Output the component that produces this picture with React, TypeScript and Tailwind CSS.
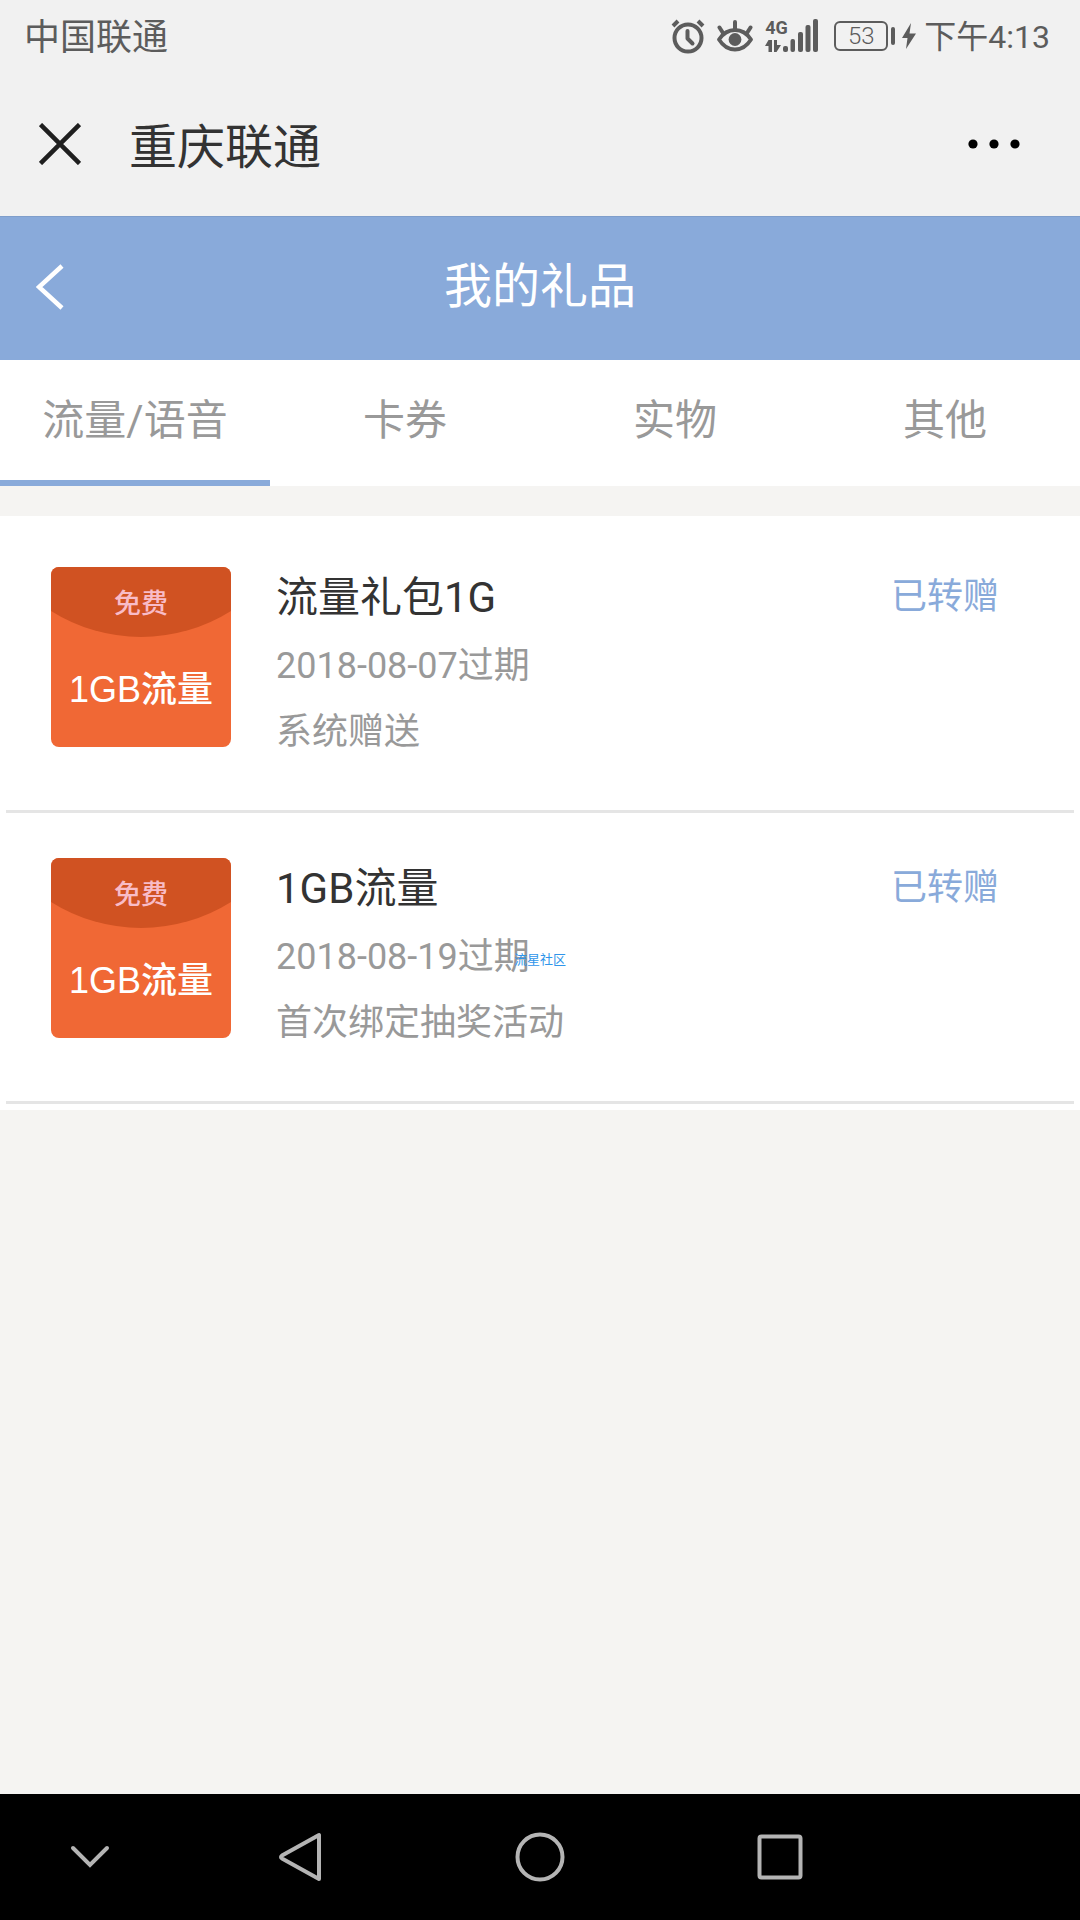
import { useState } from "react";

interface Gift {
  id: number;
  title: string;
  expires: string;
  source: string;
  status: string;
}

const tabs = ["流量/语音", "卡券", "实物", "其他"];

const gifts: Gift[] = [
  {
    id: 1,
    title: "流量礼包1G",
    expires: "2018-08-07过期",
    source: "系统赠送",
    status: "已转赠",
  },
  {
    id: 2,
    title: "1GB流量",
    expires: "2018-08-19过期",
    source: "首次绑定抽奖活动",
    status: "已转赠",
  },
];

function AlarmIcon() {
  return (
    <svg width="34" height="36" viewBox="0 0 34 36" fill="none" stroke="currentColor">
      <circle cx="17" cy="20" r="13.5" strokeWidth="4" />
      <path d="M16.5 13v7.5l5 5" strokeWidth="4" strokeLinecap="round" strokeLinejoin="round" />
      <path d="M2 8l5-5M32 8l-5-5" strokeWidth="4" />
    </svg>
  );
}

function EyeIcon() {
  return (
    <svg width="36" height="32" viewBox="0 0 36 32" fill="none" stroke="currentColor">
      <path
        d="M2 19.500C6 13.500 11.500 10 18 10s12 3.500 16 9.500C30 26 24.500 29.500 18 29.500S6 26 2 19.500z"
        strokeWidth="3.800"
        strokeLinejoin="round"
      />
      <circle cx="18" cy="19.500" r="6.400" fill="currentColor" stroke="none" />
      <path d="M18 10V2M6 13L2.500 7.500M30 13l3.500-5.500" strokeWidth="4" strokeLinecap="round" />
    </svg>
  );
}

function SignalIcon() {
  return (
    <svg width="36" height="36" viewBox="0 0 36 36" fill="currentColor">
      <rect x="0" y="28" width="5" height="6" rx="2" />
      <rect x="7.500" y="21" width="4.500" height="13" rx="2" />
      <rect x="15" y="14" width="5" height="20" rx="2" />
      <rect x="22.500" y="7" width="5" height="27" rx="2" />
      <rect x="30" y="1" width="5" height="33" rx="2" />
    </svg>
  );
}

function DataArrows() {
  return (
    <svg width="16" height="12" viewBox="0 0 16 12" fill="currentColor">
      <path d="M3.500 0H7v12H3.500V6H0zM9 0h3v5h4l-4.500 7H9z" />
    </svg>
  );
}

function StatusBar() {
  return (
    <div className="flex h-[72px] items-center justify-between pr-[30px] pl-6 text-[#5c5c5c]">
      <span className="pt-1 text-4xl">中国联通</span>
      <div className="flex items-center">
        <AlarmIcon />
        <span className="ml-3">
          <EyeIcon />
        </span>
        <span className="ml-3 flex w-[18px] flex-col gap-1">
          <span className="text-lg leading-4 font-bold">4G</span>
          <DataArrows />
        </span>
        <SignalIcon />
        <span className="ml-[15px] flex h-[30px] w-[54px] items-center justify-center rounded-md border-2 border-current text-2xl font-light">
          53
        </span>
        <span className="ml-[3px] h-[18px] w-1 rounded-sm bg-current" />
        <svg className="ml-[7px]" width="14" height="26" viewBox="0 0 14 26" fill="currentColor">
          <path d="M9 0L0 15h5.500L4 26l10-15.500H7.500z" />
        </svg>
        <span className="ml-2 pt-0.5 text-[32px]">下午4:13</span>
      </div>
    </div>
  );
}

function TitleBar() {
  return (
    <div className="flex h-36 items-center pr-[60px] pl-[39px] text-[#1f1f1f]">
      <button type="button" aria-label="关闭">
        <svg width="42" height="42" viewBox="0 0 42 42" stroke="currentColor" strokeWidth="4.500">
          <path d="M1.500 1.500l39 39M40.500 1.500l-39 39" />
        </svg>
      </button>
      <span className="ml-12 pt-2 text-5xl text-[#333333]">重庆联通</span>
      <button type="button" aria-label="更多" className="ml-auto">
        <svg width="52" height="10" viewBox="0 0 52 10" fill="#000">
          <circle cx="5" cy="5" r="4.600" />
          <circle cx="26" cy="5" r="4.600" />
          <circle cx="47" cy="5" r="4.600" />
        </svg>
      </button>
    </div>
  );
}

function PageHeader() {
  return (
    <header className="grid h-36 grid-cols-[1fr_auto_1fr] items-center border-t border-[#7f9ecb] bg-[#89aada] px-9 pb-1 text-white">
      <button type="button" aria-label="返回" className="justify-self-start">
        <svg width="28" height="46" viewBox="0 0 28 46" fill="none" stroke="currentColor" strokeWidth="4.500">
          <path d="M26 2L3 23l23 21" />
        </svg>
      </button>
      <h1 className="text-5xl">我的礼品</h1>
    </header>
  );
}

function GiftBadge() {
  return (
    <div className="relative size-[180px] shrink-0 overflow-hidden rounded-lg bg-[#f06835] text-center font-['Liberation_Sans','Noto_Sans_CJK_SC',sans-serif] font-medium">
      <svg className="absolute inset-0" width="180" height="180" viewBox="0 0 180 180">
        <path d="M0 0h180v44A169 169 0 0 1 0 44z" fill="#d05222" />
      </svg>
      <div className="relative pt-[17px]">
        <p className="text-[27px] leading-10 text-[#f8bcc8]">免费</p>
        <p className="mt-10 text-4xl leading-[52px] whitespace-nowrap text-white">1GB流量</p>
      </div>
    </div>
  );
}

function GiftRow({ gift }: { gift: Gift }) {
  return (
    <li className="flex items-start border-b-3 border-[#e5e5e5] pt-[45px] pr-[75px] pb-[63px] pl-[45px]">
      <GiftBadge />
      <div className="ml-[45px] h-[180px] flex-1">
        <h2 className="text-[42px] leading-[62px] text-[#333333]">{gift.title}</h2>
        <p className="mt-1 text-4xl leading-[66px] text-[#999999]">{gift.expires}</p>
        <p className="text-4xl leading-[66px] text-[#999999]">{gift.source}</p>
      </div>
      <span className="text-4xl leading-[60px] text-[#89aada]">{gift.status}</span>
    </li>
  );
}

function NavBar() {
  return (
    <nav className="grid h-[126px] grid-cols-[3fr_4fr_4fr_4fr_3fr] items-center justify-items-center bg-black text-[#b4b4b4]">
      <button type="button" aria-label="收起">
        <svg width="40" height="24" viewBox="0 0 40 24" fill="none" stroke="currentColor" strokeWidth="4">
          <path d="M3 3l17 17L37 3" strokeLinecap="round" />
        </svg>
      </button>
      <button type="button" aria-label="后退">
        <svg width="44" height="50" viewBox="0 0 44 50" fill="none" stroke="currentColor" strokeWidth="4">
          <path d="M41 3v44L4 26.500q-2-1.500 0-3z" strokeLinejoin="round" />
        </svg>
      </button>
      <button type="button" aria-label="主页">
        <svg width="50" height="50" viewBox="0 0 50 50" fill="none" stroke="currentColor" strokeWidth="4">
          <circle cx="25" cy="25" r="22.500" />
        </svg>
      </button>
      <button type="button" aria-label="最近任务">
        <svg width="46" height="46" viewBox="0 0 46 46" fill="none" stroke="currentColor" strokeWidth="4">
          <rect x="2.500" y="2.500" width="41" height="41" rx="2" />
        </svg>
      </button>
    </nav>
  );
}

export default function App() {
  const [active, setActive] = useState(0);

  return (
    <div className="relative flex min-h-screen flex-col bg-[#f5f4f2] font-[Roboto,'Noto_Sans_CJK_SC',sans-serif]">
      <div className="bg-[#f1f1f1]">
        <StatusBar />
        <TitleBar />
      </div>
      <PageHeader />
      <div role="tablist" className="grid h-[126px] grid-cols-4 bg-white">
        {tabs.map((tab, index) => (
          <button
            key={tab}
            type="button"
            role="tab"
            aria-selected={index === active}
            onClick={() => setActive(index)}
            className={`border-b-6 text-[42px] text-[#999999] ${
              index === active ? "border-[#89aada]" : "border-transparent"
            }`}
          >
            {tab}
          </button>
        ))}
      </div>
      <main className="mt-[30px] flex-1">
        <ul className="bg-white p-1.5">
          {gifts.map((gift) => (
            <GiftRow key={gift.id} gift={gift} />
          ))}
        </ul>
      </main>
      <NavBar />
      <div className="pointer-events-none absolute inset-0 flex items-center justify-center text-[13px] text-[#2f95ea]">
        流星社区
      </div>
    </div>
  );
}
